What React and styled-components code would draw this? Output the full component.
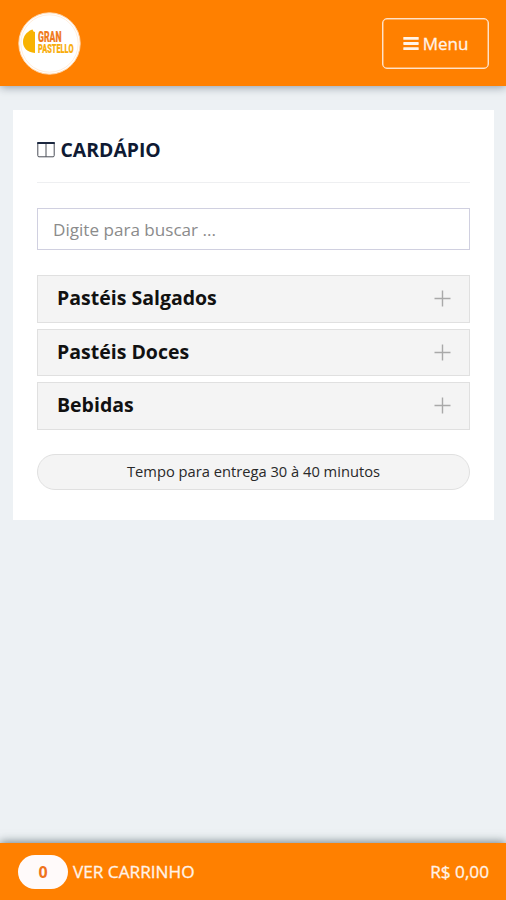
import React from "react";
import styled, { createGlobalStyle } from "styled-components";

const GlobalStyle = createGlobalStyle`
  * { box-sizing: border-box; }
  body { margin: 0; background: #edf1f4; font-family: "Open Sans", sans-serif; }
`;

const Page = styled.div`
  height: 100vh;
  display: flex;
  flex-direction: column;
  overflow: hidden;
`;

const Header = styled.header`
  height: 85.5px;
  flex: none;
  display: flex;
  align-items: center;
  justify-content: space-between;
  padding: 2px 17px 0 18px;
  background: #ff8000;
  box-shadow: 0 1px 9px rgba(60, 75, 90, 0.55);
`;

const Logo = styled.svg`
  display: block;
  width: 63px;
  height: 63px;
  overflow: visible;
`;

const MenuButton = styled.button`
  width: 107px;
  height: 51px;
  display: flex;
  align-items: center;
  justify-content: center;
  gap: 4px;
  padding: 0;
  border: 1px solid #ffe2c8;
  box-shadow: inset 0 0 0 0.5px #ffd9b5;
  border-radius: 5px;
  background: transparent;
  color: #fff3e8;
  font: 400 17px/24px "Open Sans", sans-serif;
  -webkit-text-stroke: 0.3px #fff3e8;
`;

const Content = styled.main`
  flex: 1;
  padding: 24.5px 12px 0 13px;
`;

const Card = styled.section`
  height: 410px;
  padding: 24px 24px 0;
  background: #fff;
`;

const Title = styled.h1`
  height: 49px;
  margin: 0 0 25px;
  padding-top: 1px;
  display: flex;
  align-items: flex-start;
  gap: 5.5px;
  border-bottom: 1px solid #eeeff1;
  color: #0f1a33;
  font-size: 19.4px;
  line-height: 29px;
  font-weight: 700;

  svg { margin-top: 6px; flex: none; }
`;

const Search = styled.input`
  display: block;
  width: 100%;
  height: 42px;
  padding: 1px 15px 0 15px;
  border: 1px solid #d0d0e0;
  border-radius: 0;
  outline: 0;
  background: #fff;
  font: 400 17.1px "Open Sans", sans-serif;

  &::placeholder { color: #8b8b8b; opacity: 1; }
`;

const Categories = styled.div`
  display: grid;
  gap: 6px;
  margin-top: 25px;
`;

const Category = styled.button`
  height: 47.7px;
  display: flex;
  align-items: center;
  justify-content: space-between;
  padding: 0 18px 2px 19px;
  border: 1px solid #e0e0e0;
  background: #f4f4f4;
  color: #111;
  font: 700 19.5px/26px "Open Sans", sans-serif;

  svg { margin-top: 1px; }
`;

const DeliveryTime = styled.div`
  height: 36px;
  margin-top: 24.4px;
  border: 1px solid #e0e0e0;
  border-radius: 18px;
  background: #f4f4f4;
  color: #292929;
  font-size: 14.7px;
  line-height: 33px;
  text-align: center;
`;

const CartBar = styled.footer`
  height: 57px;
  flex: none;
  display: flex;
  align-items: center;
  padding: 1px 17px 0 18px;
  background: #ff8000;
  box-shadow: 0 -1px 9px rgba(45, 65, 70, 0.65);
  color: #fff3e8;
  font-size: 17.2px;
  line-height: 22px;
  -webkit-text-stroke: 0.3px #fff3e8;
`;

const Count = styled.span`
  width: 50px;
  height: 34px;
  margin-right: 5px;
  border-radius: 17px;
  background: #fffafa;
  color: #ef731c;
  font-weight: 700;
  font-size: 16px;
  line-height: 34px;
  text-align: center;
  -webkit-text-stroke: 0;
`;

const Total = styled.span`
  margin-left: auto;
`;

const categories = ["Pastéis Salgados", "Pastéis Doces", "Bebidas"];

function BrandLogo() {
  return (
    <Logo viewBox="0 0 63 63" role="img" aria-label="Gran Pastello">
      <circle cx="31.5" cy="31.5" r="30.7" fill="#fff" stroke="#ffd7ae" strokeWidth="1" />
      <circle cx="31.5" cy="31.5" r="28.7" fill="none" stroke="#ffe9d2" strokeWidth="0.8" />
      <path d="M13 18 C9 20 5 24 5 30 C5 36 9 40 17 41 V20 L15.5 19.5 L14.5 17.5 Z" fill="#f8b300" />
      <g fontFamily="Roboto" fontWeight="900" strokeWidth="0.2">
        <text x="20" y="29.5" fontSize="15" fill="#f07a1d" stroke="#f07a1d" textLength="23.5" lengthAdjust="spacingAndGlyphs">GRAN</text>
        <text x="20" y="41" fontSize="12.5" fill="#f9ae0c" stroke="#f9ae0c" textLength="35.5" lengthAdjust="spacingAndGlyphs">PASTELLO</text>
      </g>
    </Logo>
  );
}

export default function App() {
  return (
    <Page>
      <GlobalStyle />
      <Header>
        <BrandLogo />
        <MenuButton>
          <svg width="16" height="15" viewBox="0 0 16 15" fill="#fff3e8">
            <rect x="0.3" y="1" width="15.4" height="2.8" rx="0.6" />
            <rect x="0.3" y="6.1" width="15.4" height="2.8" rx="0.6" />
            <rect x="0.3" y="11.2" width="15.4" height="2.8" rx="0.6" />
          </svg>
          Menu
        </MenuButton>
      </Header>
      <Content>
        <Card>
          <Title>
            <svg width="18" height="17" viewBox="0 0 18 17" fill="none" stroke="#4a4e57">
              <path d="M0.8 3V14.6Q0.8 15.8 2 15.8H16Q17.2 15.8 17.2 14.6V3M9 3V15.8" />
              <path d="M1 2H17" stroke="#1c2840" strokeWidth="2.2" strokeLinecap="round" />
            </svg>
            CARDÁPIO
          </Title>
          <Search placeholder="Digite para buscar ..." />
          <Categories>
            {categories.map((name) => (
              <Category key={name}>
                {name}
                <svg width="17" height="17" viewBox="0 0 17 17" stroke="#a9a9a9" strokeWidth="1.4">
                  <path d="M8.5 0.5V16.5M0.5 8.5H16.5" />
                </svg>
              </Category>
            ))}
          </Categories>
          <DeliveryTime>Tempo para entrega 30 à 40 minutos</DeliveryTime>
        </Card>
      </Content>
      <CartBar>
        <Count>0</Count>
        VER CARRINHO
        <Total>R$ 0,00</Total>
      </CartBar>
    </Page>
  );
}
